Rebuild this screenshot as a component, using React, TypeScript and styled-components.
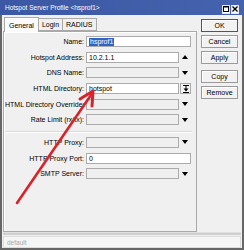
import React from "react";
import styled, { createGlobalStyle } from "styled-components";

const Global = createGlobalStyle`
  html, body { margin: 0; padding: 0; width: 244px; height: 250px; overflow: hidden; background: #f0f0f0; }
  #root { width: 244px; height: 250px; }
  * { box-sizing: border-box; }
`;

const FONT = `"Liberation Sans", Arial, sans-serif`;

const Window = styled.div`
  position: relative;
  width: 244px;
  height: 250px;
  display: flex;
  flex-direction: column;
  background: #f0f0f0;
  font-family: ${FONT};
  font-size: 7px;
  color: #000;
`;

const TitleBar = styled.div`
  height: 15px;
  flex: none;
  display: flex;
  align-items: center;
  padding: 0 5px 0 5px;
  background: linear-gradient(90deg, #3c58a4, #4462ad);
  color: #fff;
  font-size: 6.5px;
`;

const TitleText = styled.div`
  flex: 1;
  white-space: nowrap;
`;

const TitleButtons = styled.div`
  display: flex;
  gap: 1px;
  margin-top: 3px;
`;

const TitleBtn = styled.div`
  width: 8px;
  height: 9px;
  background: #fff;
  border: 1px solid #dfe6f4;
  display: flex;
  align-items: center;
  justify-content: center;
`;

const Body = styled.div`
  flex: 1;
  display: flex;
  flex-direction: column;
  border-left: 2px solid #666;
  border-right: 2px solid #666;
  border-bottom: 2px solid #666;
`;

const Main = styled.div`
  flex: 1;
  display: flex;
  padding: 2px 0 0 1px;
  min-height: 0;
`;

const LeftSide = styled.div`
  width: 194px;
  display: flex;
  flex-direction: column;
`;

const Tabs = styled.div`
  height: 14px;
  display: flex;
  align-items: flex-end;
  padding-left: 1px;
  position: relative;
  z-index: 1;
`;

const Tab = styled.div<{ $active?: boolean }>`
  height: ${(p) => (p.$active ? "15px" : "13px")};
  margin-bottom: ${(p) => (p.$active ? "-1px" : "0")};
  padding: 0 ${(p) => (p.$active ? "4px" : "3px")};
  display: flex;
  align-items: center;
  border: 1px solid #a9a9a9;
  border-bottom: ${(p) => (p.$active ? "none" : "1px solid #a9a9a9")};
  border-left: ${(p) => (p.$active ? "1px solid #a9a9a9" : "none")};
  background: ${(p) => (p.$active ? "#fafafa" : "#f0f0f0")};
  box-shadow: ${(p) => (p.$active ? "inset 1px 1px #fff" : "none")};
  white-space: nowrap;
  &:nth-child(2) { border-left: none; }
`;

const Panel = styled.div`
  flex: 1;
  border: 1px solid #a9a9a9;
  box-shadow: inset 1px 1px #fff;
  background: #f0f0f0;
  padding: 4px 0 0 1px;
  display: flex;
  flex-direction: column;
  gap: 4.7px;
`;

const Row = styled.div`
  height: 11px;
  display: flex;
  align-items: center;
`;

const Label = styled.div`
  width: 81px;
  flex: none;
  text-align: right;
  padding-right: 2px;
  white-space: nowrap;
  overflow: visible;
  line-height: 11px;
`;

const Input = styled.div<{ $blank?: boolean; $w: number }>`
  position: relative;
  width: ${(p) => p.$w}px;
  height: 11px;
  flex: none;
  border: 1px solid #ababab;
  background: ${(p) => (p.$blank ? "#efefef" : "#fff")};
  padding-left: 2px;
  display: flex;
  align-items: center;
  white-space: nowrap;
  overflow: hidden;
`;

const Selected = styled.span`
  background: #3063c6;
  color: #fff;
  padding: 0 1px;
  line-height: 8px;
`;

const ArrowSlot = styled.div`
  width: 12px;
  height: 11px;
  display: flex;
  align-items: center;
  justify-content: center;
`;

const SmallBtn = styled.div`
  width: 11px;
  height: 11px;
  margin-left: 1px;
  border: 1px solid #ababab;
  background: #f4f4f4;
  display: flex;
  align-items: center;
  justify-content: center;
`;

const Separator = styled.div`
  height: 2px;
  width: 187px;
  border-top: 1px solid #dadada;
  border-bottom: 1px solid #fff;
  margin: 0.5px 0 -0.5px 0;
`;

const Buttons = styled.div`
  margin-left: 4px;
  padding-top: 2px;
  width: 37px;
  display: flex;
  flex-direction: column;
  gap: 3px;
`;

const Button = styled.div<{ $default?: boolean; $gapTop?: boolean }>`
  height: 13px;
  border: 1px solid ${(p) => (p.$default ? "#555" : "#9a9a9a")};
  background: #f2f2f2;
  box-shadow: inset 1px 1px #fff;
  display: flex;
  align-items: center;
  justify-content: center;
  margin-top: ${(p) => (p.$gapTop ? "3px" : "0")};
`;

const Footer = styled.div`
  flex: none;
  display: flex;
  flex-direction: column;
  padding: 0 1px 0 1px;
`;

const Band = styled.div`
  height: 3px;
  background: #cfcfcf;
  border-top: 1px solid #e0e0e0;
`;

const Status = styled.div`
  height: 12px;
  margin-top: 1px;
  border: 1px solid #dcdcdc;
  background: #f5f5f5;
  color: #a8a8a8;
  font-size: 6.5px;
  padding-left: 3px;
  display: flex;
  align-items: center;
`;

const Overlay = styled.svg`
  position: absolute;
  left: 0;
  top: 0;
  width: 244px;
  height: 250px;
  pointer-events: none;
`;

const Down = () => (
  <svg width="6" height="4" viewBox="0 0 6 4">
    <path d="M0 0H6L3 4Z" fill="#000" />
  </svg>
);
const Up = () => (
  <svg width="6" height="4" viewBox="0 0 6 4">
    <path d="M0 4H6L3 0Z" fill="#000" />
  </svg>
);
const Expand = () => (
  <svg width="6" height="8" viewBox="0 0 6 8">
    <path d="M0 0.5H6M3 0.5V4M0 7.5H6" stroke="#000" strokeWidth="1" />
    <path d="M0.5 3.5H5.5L3 6.5Z" fill="#000" />
  </svg>
);

type Field = {
  label: string;
  value?: React.ReactNode;
  blank?: boolean;
  kind: "full" | "down" | "up" | "expand";
};

const top: Field[] = [
  { label: "Name:", value: <Selected>hsprof1</Selected>, kind: "full" },
  { label: "Hotspot Address:", value: "10.2.1.1", kind: "up" },
  { label: "DNS Name:", blank: true, kind: "down" },
  { label: "HTML Directory:", value: "hotspot", kind: "expand" },
  { label: "HTML Directory Override:", blank: true, kind: "down" },
  { label: "Rate Limit (rx/tx):", blank: true, kind: "down" },
];

const bottom: Field[] = [
  { label: "HTTP Proxy:", blank: true, kind: "down" },
  { label: "HTTP Proxy Port:", value: "0", kind: "full" },
  { label: "SMTP Server:", blank: true, kind: "down" },
];

const FieldRow = ({ f }: { f: Field }) => (
  <Row>
    <Label>{f.label}</Label>
    <Input $blank={f.blank} $w={f.kind === "full" ? 105 : 93}>
      {f.value}
    </Input>
    {f.kind === "down" && (
      <ArrowSlot>
        <Down />
      </ArrowSlot>
    )}
    {f.kind === "up" && (
      <ArrowSlot>
        <Up />
      </ArrowSlot>
    )}
    {f.kind === "expand" && (
      <SmallBtn>
        <Expand />
      </SmallBtn>
    )}
  </Row>
);

export default function App() {
  return (
    <>
      <Global />
      <Window>
        <TitleBar>
          <TitleText>Hotspot Server Profile &lt;hsprof1&gt;</TitleText>
          <TitleButtons>
            <TitleBtn>
              <svg width="6" height="6" viewBox="0 0 6 6">
                <rect x="0.5" y="0.5" width="5" height="5" fill="none" stroke="#000" />
                <path d="M0 1H6" stroke="#000" />
              </svg>
            </TitleBtn>
            <TitleBtn>
              <svg width="6" height="6" viewBox="0 0 6 6">
                <path d="M0.5 0.5L5.5 5.5M5.5 0.5L0.5 5.5" stroke="#000" strokeWidth="1.4" />
              </svg>
            </TitleBtn>
          </TitleButtons>
        </TitleBar>
        <Body>
          <Main>
            <LeftSide>
              <Tabs>
                <Tab $active>General</Tab>
                <Tab>Login</Tab>
                <Tab>RADIUS</Tab>
              </Tabs>
              <Panel>
                {top.map((f) => (
                  <FieldRow key={f.label} f={f} />
                ))}
                <Separator />
                {bottom.map((f) => (
                  <FieldRow key={f.label} f={f} />
                ))}
              </Panel>
            </LeftSide>
            <Buttons>
              <Button $default>OK</Button>
              <Button>Cancel</Button>
              <Button>Apply</Button>
              <Button $gapTop>Copy</Button>
              <Button>Remove</Button>
            </Buttons>
          </Main>
          <Footer>
            <Band />
            <Status>default</Status>
          </Footer>
        </Body>
        <Overlay viewBox="0 0 244 250">
          <line x1="17" y1="203" x2="91" y2="95" stroke="#d8232a" strokeWidth="2.6" strokeLinecap="round" />
          <polyline
            points="80,99 93,91 92,106"
            fill="none"
            stroke="#d8232a"
            strokeWidth="3"
            strokeLinejoin="round"
            strokeLinecap="round"
          />
        </Overlay>
      </Window>
    </>
  );
}
